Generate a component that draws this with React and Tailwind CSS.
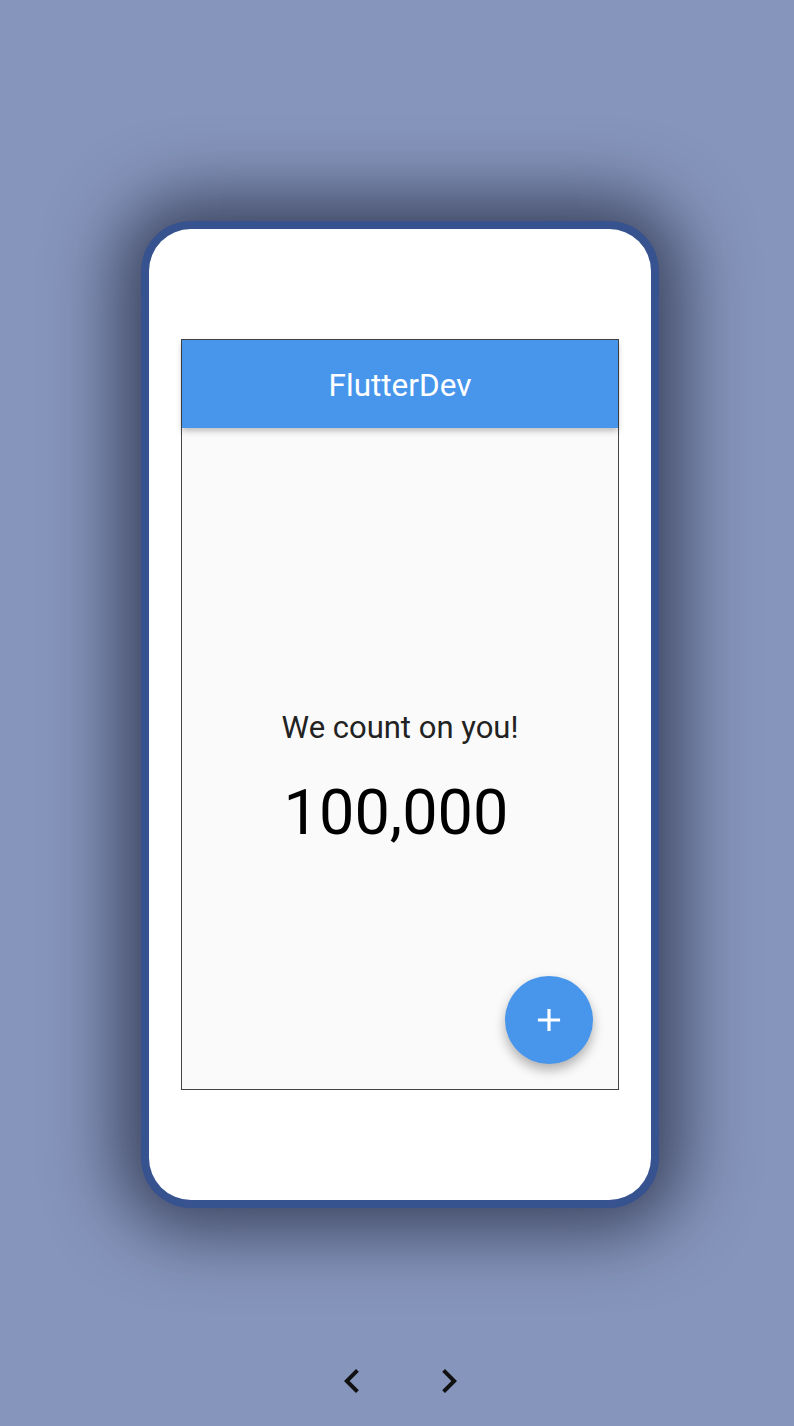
import { MdAdd, MdChevronLeft, MdChevronRight } from 'react-icons/md';

export default function App() {
  return (
    <div
      className="w-[794px] h-[1426px] bg-[#8695bc] flex flex-col items-center overflow-hidden"
      style={{ fontFamily: 'Roboto, "Noto Sans", sans-serif' }}
    >
      {/* Phone frame */}
      <div className="mt-[221px] ml-[6px] w-[518px] h-[987px] rounded-[50px] bg-[#36528f] p-[8px] shadow-[0_0_70px_22px_rgba(20,25,45,0.68)]">
        <div className="w-full h-full rounded-[42px] bg-white px-[32px] py-[110px]">
          {/* Screen */}
          <div className="w-full h-full border border-[#444] bg-[#fafafa] flex flex-col">
            <div className="h-[88px] shrink-0 bg-[#4796eb] flex items-center justify-center pt-[3px] shadow-[0_3px_6px_rgba(0,0,0,0.25)] relative z-10">
              <span className="text-white text-[31.5px] leading-none">FlutterDev</span>
            </div>
            <div className="flex-1 flex flex-col items-center justify-center relative pt-[42px]">
              <div className="text-[31px] leading-[36px] text-[#222]">We count on you!</div>
              <div className="mt-[31px] mr-[8px] text-[63px] leading-[72px] text-black">100,000</div>
              <button className="absolute right-[25px] bottom-[25px] w-[88px] h-[88px] rounded-full bg-[#4796eb] flex items-center justify-center shadow-[0_6px_12px_rgba(0,0,0,0.3)]">
                <MdAdd size={38} color="#fff" />
              </button>
            </div>
          </div>
        </div>
      </div>

      {/* Pager */}
      <div className="mt-[149px] ml-[6px] flex items-center gap-[49px] text-[#111]">
        <MdChevronLeft size={48} />
        <MdChevronRight size={48} />
      </div>
    </div>
  );
}
